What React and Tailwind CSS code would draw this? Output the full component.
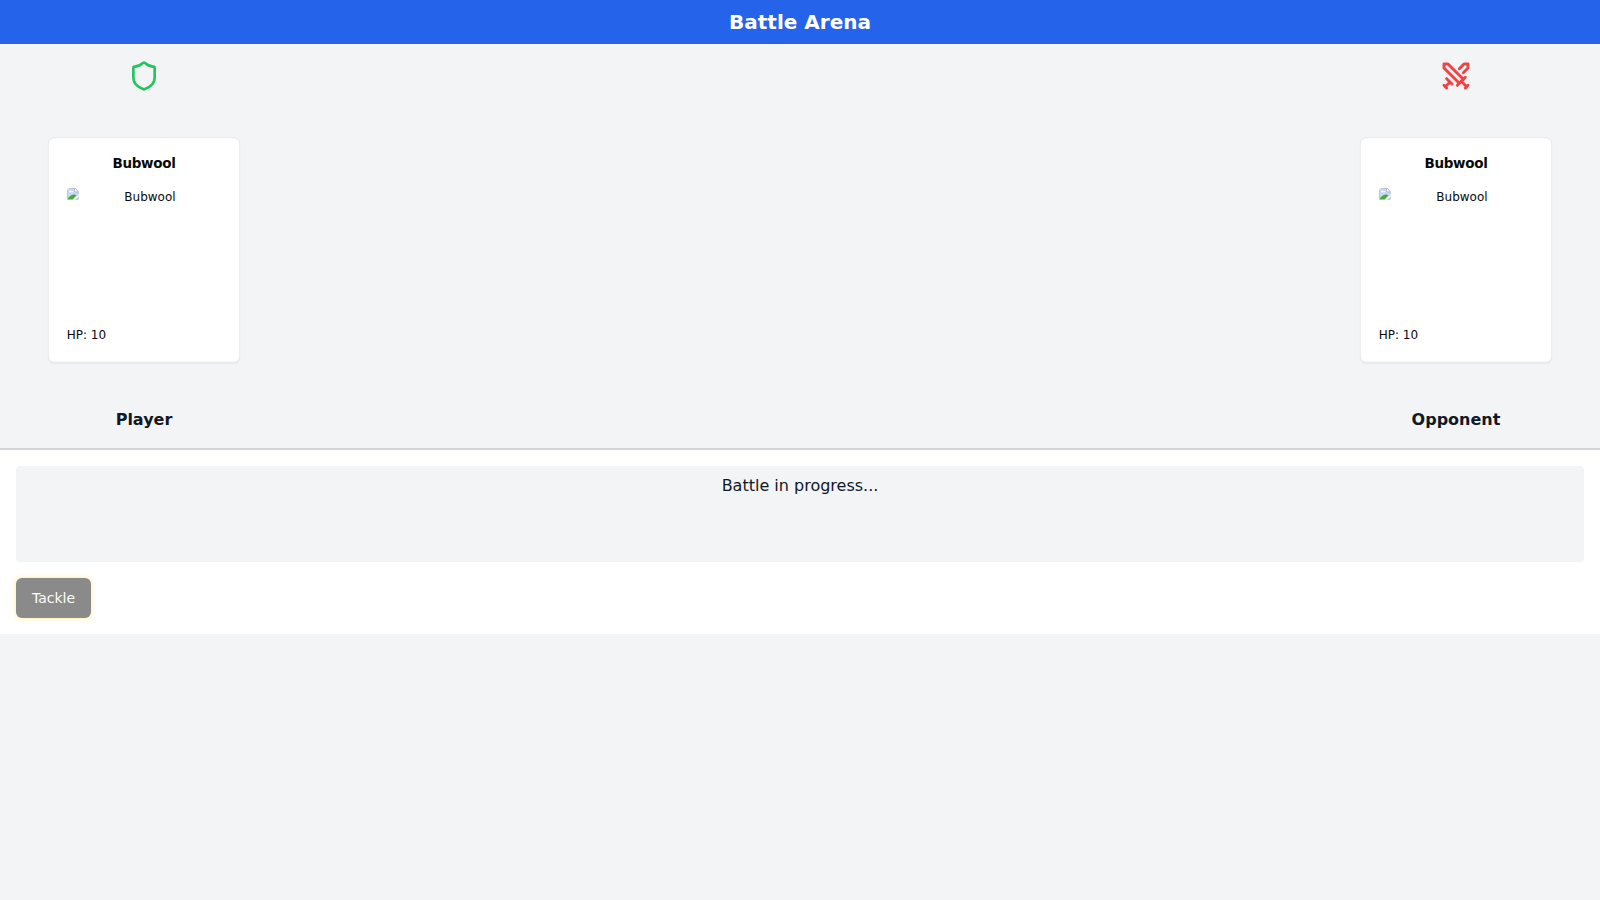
import { Shield, Swords } from 'lucide-react';

function MissingPicture() {
  return (
    <svg className="size-4 shrink-0" viewBox="0 0 16 16" aria-hidden="true">
      <path d="M0 0h11l5 5v11H0z" fill="#c6d7f8" />
      <path d="M3 6c0-2 2-3 3.500-1.500C8 3.500 9.500 5 9 6z" fill="#fff" />
      <path d="M1 15.500C3 11.500 7 8 12 9.500l1 .5-5.500 5.500z" fill="#46ad2b" />
      <path d="M16 8.500 8.500 16h3L16 11.500z" fill="#fff" />
      <path d="M.5 15.500V.5H11L15.500 5v3M.5 15.500H8M12 15.500h3.500V12" fill="none" stroke="#b0b0b0" />
      <path d="M10.500 1v4.500H15" fill="#fff" stroke="#b0b0b0" />
    </svg>
  );
}

function CreatureCard({ name, hp }) {
  return (
    <div className="flex h-[300px] w-64 scale-75 flex-col gap-6 rounded-lg border border-[#e5e7eb] bg-white p-6 text-[#0a0a0a] shadow-[0_1px_2px_0_rgb(0_0_0/0.05)]">
      <h3 className="text-center text-lg leading-none font-semibold tracking-tight">{name}</h3>
      <div className="flex h-40 w-full items-start overflow-hidden rounded-md">
        <MissingPicture />
        <span className="flex-1 text-center">{name}</span>
      </div>
      <p>HP: {hp}</p>
    </div>
  );
}

function Fighter({ icon, name, hp, label }) {
  return (
    <section className="flex flex-col items-center gap-2">
      {icon}
      <CreatureCard name={name} hp={hp} />
      <span className="font-bold">{label}</span>
    </section>
  );
}

export default function App() {
  return (
    <div className="min-h-screen bg-[#f3f4f6] font-['DejaVu_Sans',sans-serif] text-[#111827]">
      <header className="bg-[#2563eb] p-2 text-center text-white">
        <h1 className="text-xl font-bold">Battle Arena</h1>
      </header>
      <main className="flex justify-between p-4">
        <Fighter
          icon={<Shield className="size-8 text-[#22c55e]" />}
          name="Bubwool"
          hp={10}
          label="Player"
        />
        <Fighter
          icon={<Swords className="size-8 text-[#ef4444]" strokeWidth={2.2} />}
          name="Bubwool"
          hp={10}
          label="Opponent"
        />
      </main>
      <footer className="border-t-2 border-[#d1d5db] bg-white p-4">
        <div className="mb-4 h-24 rounded bg-[#f3f4f6] p-2 text-center">Battle in progress...</div>
        <button
          disabled
          className="flex h-10 items-center rounded-md bg-[#171717] px-4 text-sm text-[#fafafa] opacity-50 shadow-[0_0_5px_rgb(255_215_0/0.85)]"
        >
          Tackle
        </button>
      </footer>
    </div>
  );
}
